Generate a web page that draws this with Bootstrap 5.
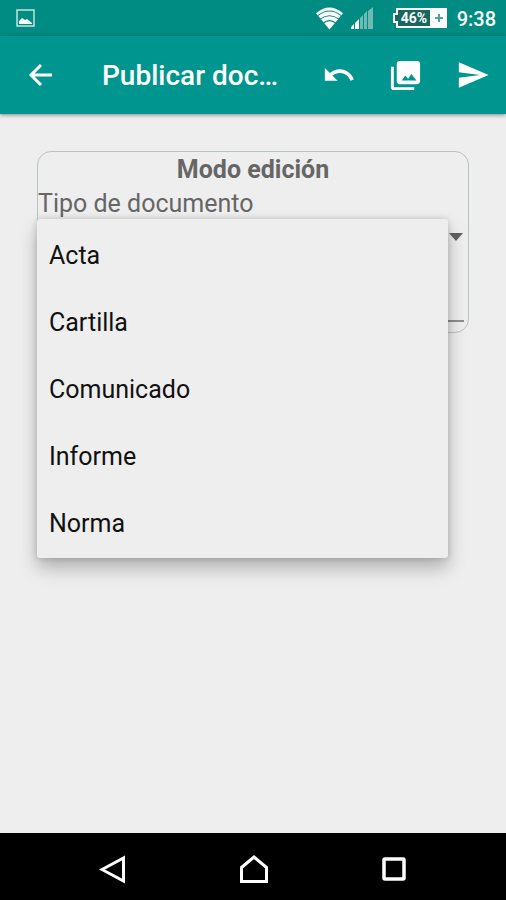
<!DOCTYPE html>
<html lang="es">
<head>
<meta charset="utf-8">
<meta name="viewport" content="width=device-width, initial-scale=1">
<title>Publicar documento</title>
<link href="https://cdn.jsdelivr.net/npm/bootstrap@5.3.0/dist/css/bootstrap.min.css" rel="stylesheet">
<style>
  body { font-family: Roboto, "Liberation Sans", sans-serif; background: #eeeeee; color: #666666; }
  .status-strip { background: #008c82; height: 36px; padding: 0 10px 0 16px; }
  .status-clock { font-size: 20px; line-height: 24px; font-weight: 500; padding-top: 2px; }
  .charge-text { font: 700 14px Roboto, sans-serif; }
  .app-bar { background: #00958e; height: 78px; box-shadow: 0 1px 4px rgba(0,0,0,.45); z-index: 2; }
  .app-bar .btn, .sys-nav .btn { border: 0; border-radius: 0; padding: 0; }
  .back-btn { width: 80px; height: 78px; margin-right: 22px; }
  .action-btn { width: 67px; height: 78px; }
  .screen-title { font-size: 28px; line-height: 32px; font-weight: 500; padding-top: 2px; }
  .page-area { padding: 37px; }
  .edit-panel { border: 1px solid #b9c2c2; border-radius: 14px; }
  .panel-title { font-size: 25px; line-height: 36px; font-weight: 700; }
  .field-label { font-size: 25px; line-height: 32px; }
  .type-toggle { height: 34px; padding: 0 5px; border: 0; }
  .title-input { height: 68px; margin: 0 4px 10px; background: transparent; border: 0; border-bottom: 2px solid #8e8e8e; border-radius: 0; width: auto; }
  .type-menu.dropdown-menu { top: -1px; left: -1px; right: 20px; padding: 3px 0 1px; border: 0; border-radius: 3px; background: #eeeeee;
    box-shadow: 0 10px 18px rgba(0,0,0,.26), 0 0 6px rgba(0,0,0,.16); }
  .type-menu .dropdown-item { font-size: 25px; line-height: 31px; padding: 18px 12px; color: #111111; }
  .sys-nav { background: #000; height: 67px; padding: 4px 42px 0 43px; }
  .sys-nav .btn { width: 140px; height: 63px; }
</style>
<script src="https://cdn.jsdelivr.net/npm/bootstrap@5.3.0/dist/js/bootstrap.bundle.min.js" defer></script>
</head>
<body class="d-flex flex-column min-vh-100">

<div class="status-strip d-flex align-items-center text-white">
  <svg class="me-auto" width="19" height="18" viewBox="0 0 19 18" aria-hidden="true">
    <rect x="1" y="1" width="17" height="16" fill="none" stroke="#b9ded9" stroke-width="1.6"/>
    <path d="M3 15v-3l3-3 3 2 2-1 5 4v1z" fill="#fff"/>
  </svg>
  <svg width="27" height="24" viewBox="0 0 28 24" aria-hidden="true">
    <path d="M0 7Q14-5 28 7L14 24z" fill="#fff"/>
    <path d="M2 9.500Q14 0 26 9.500M4 13.500Q14 6 24 13.500M7 17.500Q14 12 21 17.500" fill="none" stroke="#008c82" stroke-width="1.100"/>
  </svg>
  <svg class="ms-2" width="22" height="22" viewBox="0 0 22 22" aria-hidden="true">
    <path d="M0 22v-2l3-3v5zM4 22v-6l4-4v10z" fill="#fff"/>
    <path d="M9 22V11l3-3v14zM13 22V7l3-3v18zM17 22V4l5-4v22z" fill="#6fbbb4"/>
  </svg>
  <svg class="ms-3" width="60" height="22" viewBox="2 0 60 22" role="img" aria-label="Batería 46%">
    <path d="M10 2H44V20H10V15H7V7H10z" fill="#17665f" stroke="#fff" stroke-width="2"/>
    <path d="M43 1H60V21H43z" fill="#fff"/>
    <path d="M52 7v8M48 11h8" stroke="#4da39b" stroke-width="2"/>
    <text x="27" y="16" text-anchor="middle" fill="#fff" class="charge-text">46%</text>
  </svg>
  <span class="status-clock ms-2">9:38</span>
</div>

<header class="app-bar d-flex align-items-center text-white position-relative">
  <button type="button" class="btn back-btn flex-shrink-0" aria-label="Volver">
    <svg width="24" height="24" viewBox="0 0 24 24" fill="none" stroke="#fff" stroke-width="3" aria-hidden="true"><path d="M24 12H3M13 2L3 12l10 10"/></svg>
  </button>
  <h1 class="screen-title text-truncate flex-grow-1 mb-0 me-3" title="Publicar documento">Publicar doc…</h1>
  <button type="button" class="btn action-btn flex-shrink-0" aria-label="Deshacer">
    <svg width="34" height="34" viewBox="0 0 24 24" fill="#fff" aria-hidden="true"><path d="M12.500 8c-2.650 0-5.050.99-6.900 2.600L2 7v9h9l-3.620-3.620c1.390-1.160 3.160-1.880 5.120-1.880 3.540 0 6.550 2.310 7.600 5.500l2.370-.78C21.080 11.030 17.150 8 12.500 8z"/></svg>
  </button>
  <button type="button" class="btn action-btn flex-shrink-0" aria-label="Galería">
    <svg width="35" height="35" viewBox="0 0 24 24" fill="#fff" aria-hidden="true"><path d="M22 16V4c0-1.100-.9-2-2-2H8c-1.100 0-2 .9-2 2v12c0 1.100.9 2 2 2h12c1.100 0 2-.9 2-2zm-12.500-.500l2.300-3.500 2 2.200 2.200-3.200 3.500 4.500zM2 6v14c0 1.100.9 2 2 2h14v-2H4V6H2z"/></svg>
  </button>
  <button type="button" class="btn action-btn flex-shrink-0" aria-label="Enviar">
    <svg width="34" height="34" viewBox="0 0 24 24" fill="#fff" aria-hidden="true"><path d="M2.010 21L23 12 2.010 3 2 10l15 2-15 2z"/></svg>
  </button>
</header>

<main class="page-area flex-grow-1">
  <form class="edit-panel">
    <h2 class="panel-title text-center mb-0">Modo edición</h2>
    <label class="field-label d-block" id="type-label" for="type-toggle">Tipo de documento</label>
    <div class="position-relative">
      <button type="button" id="type-toggle" class="type-toggle btn d-flex w-100 align-items-center justify-content-end" aria-haspopup="true" aria-expanded="true" aria-labelledby="type-label">
        <svg width="14" height="8" viewBox="0 0 14 8" aria-hidden="true"><path d="M0 0h14L7 8z" fill="#606060"/></svg>
      </button>
      <div class="type-menu dropdown-menu show" role="menu" aria-labelledby="type-label">
        <button type="button" class="dropdown-item" role="menuitem">Acta</button>
        <button type="button" class="dropdown-item" role="menuitem">Cartilla</button>
        <button type="button" class="dropdown-item" role="menuitem">Comunicado</button>
        <button type="button" class="dropdown-item" role="menuitem">Informe</button>
        <button type="button" class="dropdown-item" role="menuitem">Norma</button>
      </div>
    </div>
    <div class="d-flex flex-column">
      <input type="text" class="title-input" aria-label="Título">
    </div>
  </form>
</main>

<nav class="sys-nav d-flex align-items-center justify-content-between" aria-label="Sistema">
  <button type="button" class="btn" aria-label="Atrás">
    <svg width="28" height="30" viewBox="0 0 28 30" fill="none" stroke="#fff" stroke-width="3" aria-hidden="true"><path d="M24.500 4v23L3 15.500z"/></svg>
  </button>
  <button type="button" class="btn" aria-label="Inicio">
    <svg width="30" height="30" viewBox="0 0 30 30" fill="none" stroke="#fff" stroke-width="3" aria-hidden="true"><path d="M2.500 13.500L15 3l12.500 10.500V27.500h-25z"/></svg>
  </button>
  <button type="button" class="btn" aria-label="Recientes">
    <svg width="26" height="26" viewBox="0 0 26 26" fill="none" stroke="#fff" stroke-width="3.500" aria-hidden="true"><rect x="3" y="3" width="20" height="20" rx="1"/></svg>
  </button>
</nav>
</body>
</html>
